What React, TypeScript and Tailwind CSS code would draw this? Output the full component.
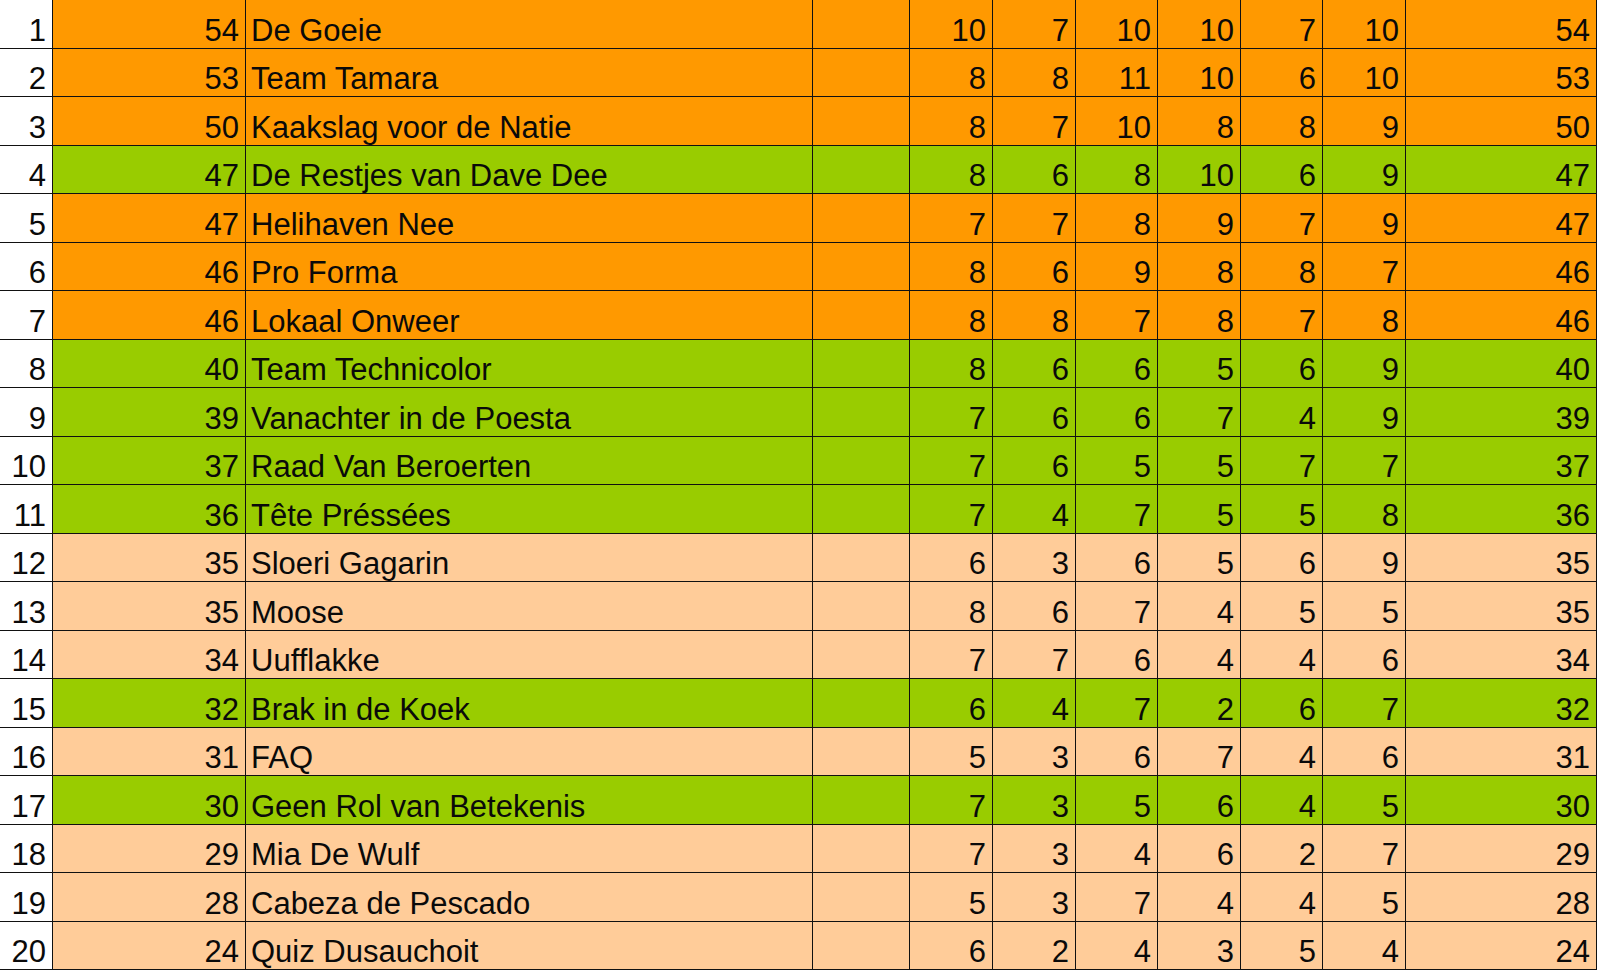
import React from "react";

type Row = {
  rank: number;
  total: number;
  team: string;
  rounds: number[];
  color: "orange" | "green" | "peach";
};

const rows: Row[] = [
  { rank: 1, total: 54, team: "De Goeie", rounds: [10, 7, 10, 10, 7, 10], color: "orange" },
  { rank: 2, total: 53, team: "Team Tamara", rounds: [8, 8, 11, 10, 6, 10], color: "orange" },
  { rank: 3, total: 50, team: "Kaakslag voor de Natie", rounds: [8, 7, 10, 8, 8, 9], color: "orange" },
  { rank: 4, total: 47, team: "De Restjes van Dave Dee", rounds: [8, 6, 8, 10, 6, 9], color: "green" },
  { rank: 5, total: 47, team: "Helihaven Nee", rounds: [7, 7, 8, 9, 7, 9], color: "orange" },
  { rank: 6, total: 46, team: "Pro Forma", rounds: [8, 6, 9, 8, 8, 7], color: "orange" },
  { rank: 7, total: 46, team: "Lokaal Onweer", rounds: [8, 8, 7, 8, 7, 8], color: "orange" },
  { rank: 8, total: 40, team: "Team Technicolor", rounds: [8, 6, 6, 5, 6, 9], color: "green" },
  { rank: 9, total: 39, team: "Vanachter in de Poesta", rounds: [7, 6, 6, 7, 4, 9], color: "green" },
  { rank: 10, total: 37, team: "Raad Van Beroerten", rounds: [7, 6, 5, 5, 7, 7], color: "green" },
  { rank: 11, total: 36, team: "Tête Préssées", rounds: [7, 4, 7, 5, 5, 8], color: "green" },
  { rank: 12, total: 35, team: "Sloeri Gagarin", rounds: [6, 3, 6, 5, 6, 9], color: "peach" },
  { rank: 13, total: 35, team: "Moose", rounds: [8, 6, 7, 4, 5, 5], color: "peach" },
  { rank: 14, total: 34, team: "Uufflakke", rounds: [7, 7, 6, 4, 4, 6], color: "peach" },
  { rank: 15, total: 32, team: "Brak in de Koek", rounds: [6, 4, 7, 2, 6, 7], color: "green" },
  { rank: 16, total: 31, team: "FAQ", rounds: [5, 3, 6, 7, 4, 6], color: "peach" },
  { rank: 17, total: 30, team: "Geen Rol van Betekenis", rounds: [7, 3, 5, 6, 4, 5], color: "green" },
  { rank: 18, total: 29, team: "Mia De Wulf", rounds: [7, 3, 4, 6, 2, 7], color: "peach" },
  { rank: 19, total: 28, team: "Cabeza de Pescado", rounds: [5, 3, 7, 4, 4, 5], color: "peach" },
  { rank: 20, total: 24, team: "Quiz Dusauchoit", rounds: [6, 2, 4, 3, 5, 4], color: "peach" },
];

const bg = {
  orange: "bg-[#ff9900]",
  green: "bg-[#99cc00]",
  peach: "bg-[#ffcc99]",
};

const cell =
  "h-[48.5px] border-r border-b border-[#111] flex items-end pb-[2px] leading-[31px] overflow-hidden whitespace-nowrap";

function App() {
  return (
    <main
      className="w-[1600px] h-[972px] bg-white text-[31px] text-[#0a0a0a] overflow-hidden"
      style={{ fontFamily: '"Liberation Sans", Arial, sans-serif' }}
    >
      <div className="grid grid-cols-[53px_193px_567px_97px_83px_83px_82px_83px_82px_83px_191px] w-[1597px]">
        {rows.map((r) => (
          <React.Fragment key={r.rank}>
            <div className={`${cell} justify-end pr-[6px] bg-white`}>{r.rank}</div>
            <div className={`${cell} justify-end pr-[6px] ${bg[r.color]}`}>{r.total}</div>
            <div className={`${cell} pl-[5px] ${bg[r.color]}`}>{r.team}</div>
            <div className={`${cell} ${bg[r.color]}`}></div>
            {r.rounds.map((v, i) => (
              <div key={i} className={`${cell} justify-end pr-[6px] ${bg[r.color]}`}>
                {v}
              </div>
            ))}
            <div className={`${cell} justify-end pr-[6px] ${bg[r.color]}`}>{r.total}</div>
          </React.Fragment>
        ))}
      </div>
    </main>
  );
}

export default App;
